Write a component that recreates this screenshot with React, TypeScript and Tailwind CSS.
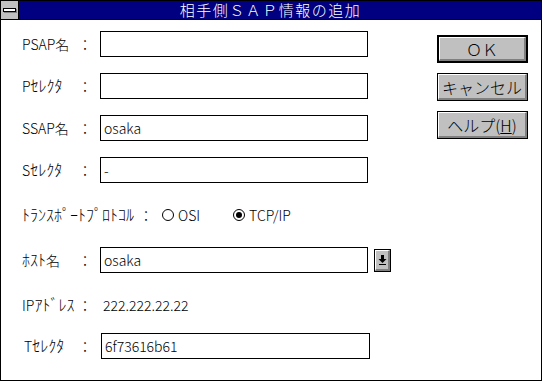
const font = { fontFamily: '"Noto Sans CJK JP", "Liberation Sans", sans-serif' };

const Kana = ({ children }: { children: React.ReactNode }) => (
    <span className="text-[16px] leading-none">{children}</span>
);

const Field = ({ value = '' }: { value?: string }) => (
    <div className="h-[26px] w-[268px] border border-black bg-white flex items-center pl-[3px] text-[14px] leading-none">
        {value}
    </div>
);

const Row = ({ label, children, mt }: { label: React.ReactNode; children: React.ReactNode; mt: string }) => (
    <div className={`flex items-center h-[26px] ${mt}`}>
        <span className="w-[56px] whitespace-nowrap">{label}</span>
        <span className="w-[14px] text-center">：</span>
        <span className="w-[8px]" />
        {children}
    </div>
);

const Radio = ({ checked, label }: { checked?: boolean; label: string }) => (
    <div className="flex items-center gap-[4px]">
        <span className="w-[12px] h-[12px] rounded-full border border-black flex items-center justify-center">
            {checked && <span className="w-[6px] h-[6px] rounded-full bg-black" />}
        </span>
        <span>{label}</span>
    </div>
);

const Button = ({ children, isDefault, mt }: { children: React.ReactNode; isDefault?: boolean; mt: string }) => (
    <div
        className={`${mt} h-[28px] w-[91px] bg-black ${isDefault ? 'p-[2px]' : 'p-[1px]'}`}
    >
        <div className="h-full w-full bg-[#c0c0c0] border-t border-l border-white border-b-2 border-r-2 border-b-[#808080] border-r-[#808080] flex items-center justify-center text-[16px] leading-none whitespace-nowrap">
            {children}
        </div>
    </div>
);

export default function App() {
    return (
        <div className="w-[544px] h-[383px] bg-white font-light" style={font}>
            <div className="w-[542px] h-[381px] border border-black flex flex-col text-[14px] text-black">
                {/* title bar */}
                <div className="h-[19px] flex border-b border-black bg-[#000080]">
                    <div className="w-[18px] h-full bg-[#c0c0c0] border-r border-black flex items-center justify-center">
                        <div className="w-[13px] h-[4px] bg-white border border-black shadow-[1px_1px_0_#808080]" />
                    </div>
                    <div className="flex-1 flex items-center justify-center text-white text-[15px] leading-[18px] tracking-[1.5px]">
                        相手側ＳＡＰ情報の追加
                    </div>
                    <div className="w-[19px]" />
                </div>

                <div className="flex flex-1">
                    <div className="flex-1 pl-[21px] pt-[11px]">
                        <Row label="PSAP名" mt="">
                            <Field />
                        </Row>
                        <Row label={<>P<Kana>ｾﾚｸﾀ</Kana></>} mt="mt-[16px]">
                            <Field />
                        </Row>
                        <Row label="SSAP名" mt="mt-[16px]">
                            <Field value="osaka" />
                        </Row>
                        <Row label={<>S<Kana>ｾﾚｸﾀ</Kana></>} mt="mt-[16px]">
                            <Field value="-" />
                        </Row>

                        <div className="flex items-center h-[26px] mt-[19px]">
                            <span className="w-[117px] whitespace-nowrap">
                                <Kana>ﾄﾗﾝｽﾎﾟｰﾄﾌﾟﾛﾄｺﾙ</Kana>
                            </span>
                            <span className="w-[14px] text-center">：</span>
                            <span className="w-[9px]" />
                            <Radio label="OSI" />
                            <span className="w-[33px]" />
                            <Radio checked label="TCP/IP" />
                        </div>

                        <Row label={<><Kana>ﾎｽﾄ</Kana>名</>} mt="mt-[19px]">
                            <Field value="osaka" />
                            <span className="w-[6px]" />
                            <div className="h-[23px] w-[17px] bg-black p-[1px]">
                                <div className="h-full w-full bg-[#c0c0c0] border-t border-l border-white border-b-2 border-r-2 border-b-[#808080] border-r-[#808080] flex flex-col items-center justify-center">
                                    <svg width="9" height="10" viewBox="0 0 9 10">
                                        <path d="M3 0h3v4h2.5L4.5 8 0.5 4H3z" fill="black" />
                                        <rect x="1" y="9" width="7" height="1" fill="black" />
                                    </svg>
                                </div>
                            </div>
                        </Row>

                        <Row label={<>IP<Kana>ｱﾄﾞﾚｽ</Kana></>} mt="mt-[19px]">
                            <span className="pl-[3px]">222.222.22.22</span>
                        </Row>

                        <div className="flex items-center h-[26px] mt-[15px] pl-[2px]">
                            <span className="w-[54px] whitespace-nowrap">
                                T<Kana>ｾﾚｸﾀ</Kana>
                            </span>
                            <span className="w-[14px] text-center">：</span>
                            <span className="w-[9px]" />
                            <div className="h-[26px] w-[269px] border border-black bg-white flex items-center pl-[3px] leading-none">
                                6f73616b61
                            </div>
                        </div>
                    </div>

                    <div className="w-[91px] mr-[13px] flex flex-col">
                        <Button isDefault mt="mt-[15px]">
                            ＯＫ
                        </Button>
                        <Button mt="mt-[10px]">キャンセル</Button>
                        <Button mt="mt-[10px]">
                            ヘルプ(<span className="underline">H</span>)
                        </Button>
                    </div>
                </div>
            </div>
        </div>
    );
}
